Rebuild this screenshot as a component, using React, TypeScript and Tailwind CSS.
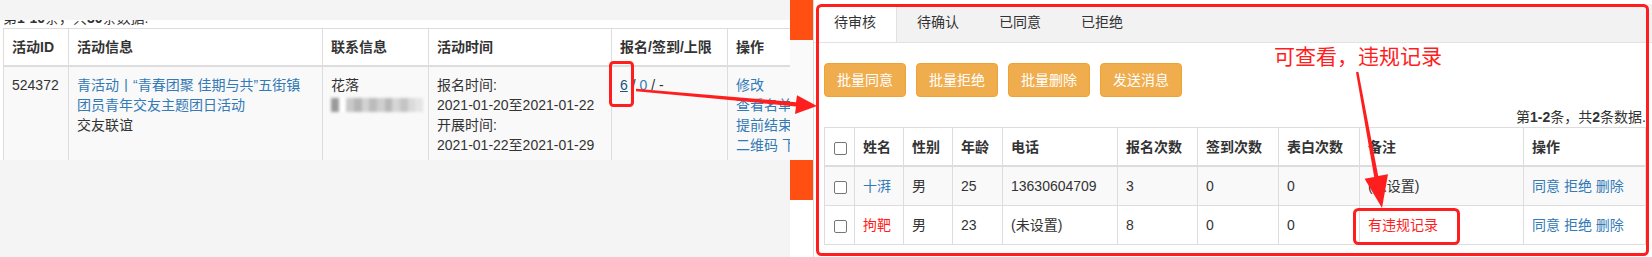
import React from 'react';

const leftCols = [65, 254, 106, 183, 116, 120];
const panelCols = [30, 49, 49, 50, 115, 80, 81, 81, 164, 122];

function Checkbox() {
  return <span className="inline-block w-[13px] h-[13px] rounded-[2px] border border-[#767676] bg-white align-middle" />;
}

function Blurred() {
  const tones = ['#9a9a9a', '#ffffff', '#c9c9c9', '#b5b5b5', '#d2d2d2', '#bcbcbc', '#cfcfcf', '#b8b8b8', '#d6d6d6', '#c4c4c4', '#dadada', '#e4e4e4'];
  return (
    <div className="flex h-[14px] mt-[3px] blur-[1.5px]">
      {tones.map((c, i) => (
        <span key={i} className="w-[8px] h-full" style={{ backgroundColor: c }} />
      ))}
    </div>
  );
}

function LeftPage() {
  const th = 'border border-[#ddd] border-b-2 px-2 py-2 text-left font-bold align-bottom whitespace-nowrap';
  const td = 'border border-[#ddd] px-2 py-2 align-top whitespace-nowrap';
  return (
    <div className="w-[790px] shrink-0 flex flex-col bg-[#f4f4f4]">
      <div className="h-[20px] shrink-0" />
      <div className="h-[140px] shrink-0 bg-white overflow-hidden pl-[3px]">
        <div className="h-[8px] overflow-hidden">
          <div className="-mt-[12px] whitespace-nowrap">
            第<b>1-10</b>条，共<b>30</b>条数据.
          </div>
        </div>
        <table className="table-fixed border-collapse w-[844px]">
          <colgroup>
            {leftCols.map((w, i) => (
              <col key={i} style={{ width: w }} />
            ))}
          </colgroup>
          <thead>
            <tr className="bg-white">
              <th className={th}>活动ID</th>
              <th className={th}>活动信息</th>
              <th className={th}>联系信息</th>
              <th className={th}>活动时间</th>
              <th className={th}>报名/签到/上限</th>
              <th className={th}>操作</th>
            </tr>
          </thead>
          <tbody>
            <tr className="bg-[#f9f9f9]">
              <td className={td}>524372</td>
              <td className={td}>
                <span className="text-[#337ab7]">
                  青活动丨“青春团聚 佳期与共”五街镇
                  <br />
                  团员青年交友主题团日活动
                </span>
                <br />
                交友联谊
              </td>
              <td className={td + ' overflow-visible'}>
                花落
                <div className="w-[92px]">
                  <Blurred />
                </div>
              </td>
              <td className={td}>
                报名时间:
                <br />
                2021-01-20至2021-01-22
                <br />
                开展时间:
                <br />
                2021-01-22至2021-01-29
              </td>
              <td className={td}>
                <span className="text-[#23527c] underline">6</span> / <span className="text-[#337ab7]">0</span> / -
              </td>
              <td className={td + ' text-[#337ab7]'}>
                修改
                <br />
                查看名单
                <br />
                提前结束
                <br />
                二维码 下载
              </td>
            </tr>
          </tbody>
        </table>
      </div>
    </div>
  );
}

function Panel() {
  const th = 'border border-[#ddd] border-b-2 px-2 pt-[9px] pb-[8px] text-left font-bold align-middle whitespace-nowrap';
  const td = 'border border-[#ddd] px-2 py-[9px] align-middle whitespace-nowrap';
  const rows = [
    { name: '十湃', nameColor: 'text-[#337ab7]', sex: '男', age: '25', phone: '13630604709', signup: '3', note: '(未设置)', noteColor: '', bg: 'bg-[#f9f9f9]' },
    { name: '拘靶', nameColor: 'text-[#ff1e1e]', sex: '男', age: '23', phone: '(未设置)', signup: '8', note: '有违规记录', noteColor: 'text-[#ff1e1e]', bg: 'bg-white' },
  ];
  return (
    <div className="w-[839px] shrink-0 bg-white border-l border-[#dcdcdc] pt-[4px] overflow-hidden">
      <div className="flex h-[39px] bg-[#f2f2f2] border-b border-[#e2e2e2]">
        {['待审核', '待确认', '已同意', '已拒绝'].map((t, i) => (
          <div
            key={t}
            className={
              'h-full flex items-center px-[20px] pb-[3px] ' + (i === 0 ? 'bg-white border-r border-[#e2e2e2]' : '')
            }
          >
            {t}
          </div>
        ))}
      </div>
      <div className="pl-[10px] pt-[20px]">
        <div className="flex gap-[10px]">
          {['批量同意', '批量拒绝', '批量删除', '发送消息'].map((b) => (
            <button
              key={b}
              className="h-[34px] px-[12px] rounded-[4px] bg-[#f0ad4e] border border-[#eea236] text-white"
            >
              {b}
            </button>
          ))}
        </div>
        <div className="mt-[10px] w-[822px] text-right whitespace-nowrap">
          第<b>1-2</b>条，共<b>2</b>条数据.
        </div>
        <table className="table-fixed border-collapse w-[821px]">
          <colgroup>
            {panelCols.map((w, i) => (
              <col key={i} style={{ width: w }} />
            ))}
          </colgroup>
          <thead>
            <tr className="bg-white">
              <th className={th + ' pl-[9px]'}>
                <Checkbox />
              </th>
              <th className={th}>姓名</th>
              <th className={th}>性别</th>
              <th className={th}>年龄</th>
              <th className={th}>电话</th>
              <th className={th}>报名次数</th>
              <th className={th}>签到次数</th>
              <th className={th}>表白次数</th>
              <th className={th}>备注</th>
              <th className={th}>操作</th>
            </tr>
          </thead>
          <tbody>
            {rows.map((r) => (
              <tr key={r.name} className={r.bg}>
                <td className={td + ' pl-[9px]'}>
                  <Checkbox />
                </td>
                <td className={td + ' ' + r.nameColor}>{r.name}</td>
                <td className={td}>{r.sex}</td>
                <td className={td}>{r.age}</td>
                <td className={td}>{r.phone}</td>
                <td className={td}>{r.signup}</td>
                <td className={td}>0</td>
                <td className={td}>0</td>
                <td className={td + ' ' + r.noteColor}>{r.note}</td>
                <td className={td + ' text-[#337ab7]'}>同意 拒绝 删除</td>
              </tr>
            ))}
          </tbody>
        </table>
      </div>
    </div>
  );
}

export default function App() {
  return (
    <div className="relative w-[1652px] h-[257px] overflow-hidden bg-white text-[14px] leading-[20px] text-[#333] font-['Liberation_Sans','Noto_Sans_CJK_SC',sans-serif]">
      <div className="flex h-full">
        <LeftPage />
        <div className="w-[23px] shrink-0 flex flex-col bg-white">
          <div className="h-[40px] bg-[#ff4f12]" />
          <div className="h-[120px] bg-[#fafafa]" />
          <div className="h-[40px] bg-[#ff4f12]" />
        </div>
        <Panel />
      </div>

      {/* annotations */}
      <svg className="absolute left-0 top-0 pointer-events-none" width="1652" height="257" viewBox="0 0 1652 257">
        <rect x="817.5" y="5.5" width="830" height="249" rx="4" fill="none" stroke="#ff1e1e" strokeWidth="3" />
        <rect x="610.5" y="62.5" width="22" height="43" rx="3" fill="none" stroke="#ff1e1e" strokeWidth="3" />
        <rect x="1354.5" y="209.5" width="104" height="34" rx="4" fill="none" stroke="#ff1e1e" strokeWidth="3" />
        <polygon
          points="636,88.8 796,102.2 797,95.2 817,106 795,114 796,106.4 636,91.2"
          fill="#ff1e1e"
        />
        <polygon
          points="1356,72.2 1358.4,71.8 1378.2,176.1 1388,174.3 1382,208 1364.6,178.7 1374.2,176.9"
          fill="#ff1e1e"
        />
      </svg>
      <div className="absolute left-[1274px] top-[45px] text-[21px] leading-[21px] text-[#ff1e1e] whitespace-nowrap font-['Noto_Sans_CJK_SC',sans-serif]">
        可查看，违规记录
      </div>
    </div>
  );
}
